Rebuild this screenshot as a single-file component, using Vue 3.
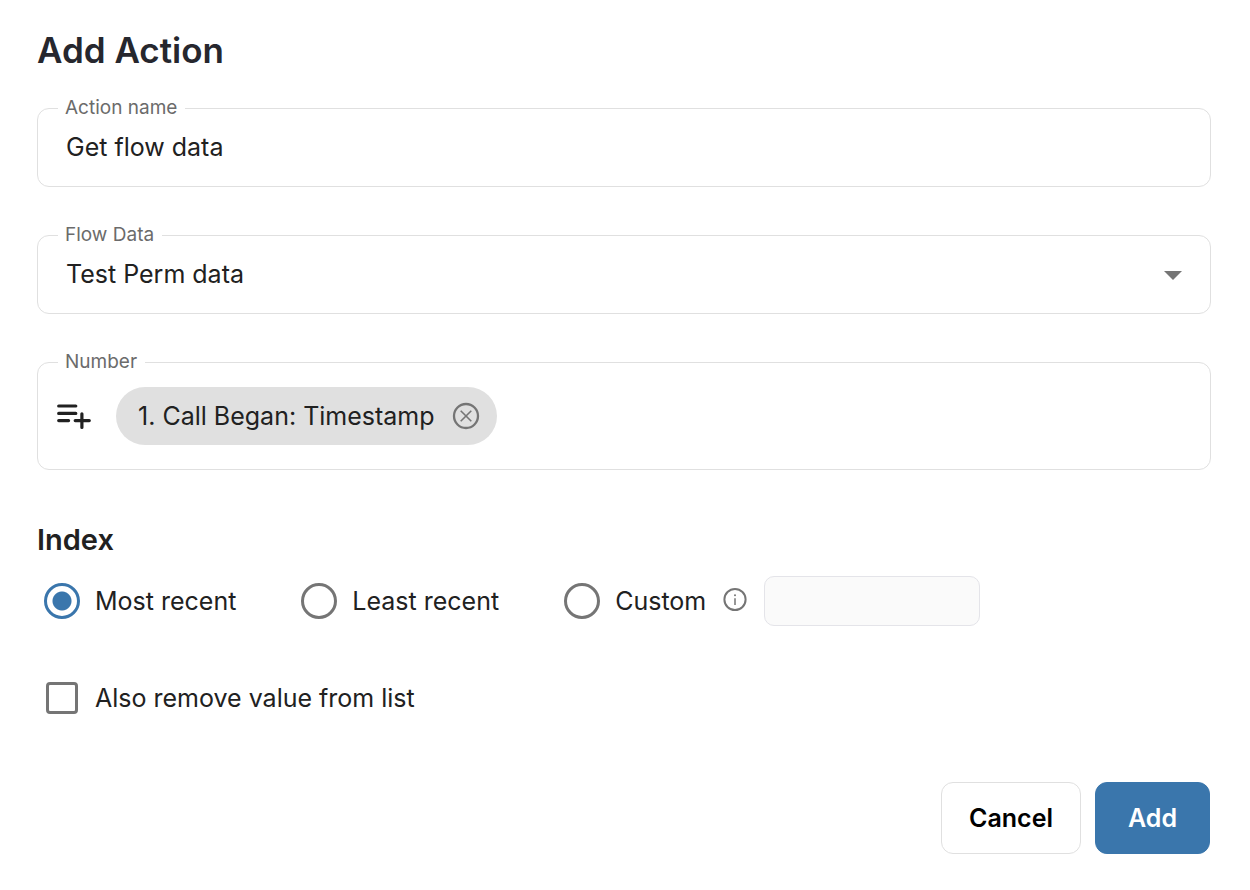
<script setup>
import { ref } from 'vue'

const actionName = ref('Get flow data')
const flowData = ref('Test Perm data')
const chips = ref(['1. Call Began: Timestamp'])
const index = ref('most')
const customIndex = ref('')
const removeValue = ref(false)
</script>

<template>
  <form class="dialog" @submit.prevent>
    <h1 class="title">Add Action</h1>

    <div class="field">
      <label class="field-label" for="action-name">Action name</label>
      <input id="action-name" v-model="actionName" class="control" type="text" />
    </div>

    <div class="field">
      <label class="field-label" for="flow-data">Flow Data</label>
      <select id="flow-data" v-model="flowData" class="control">
        <option>Test Perm data</option>
      </select>
      <svg class="arrow" width="18" height="9" viewBox="0 0 18 9" aria-hidden="true">
        <path d="M0 0h18L9 9z" fill="#757575" />
      </svg>
    </div>

    <div class="field chip-field" role="group" aria-labelledby="number-label">
      <span id="number-label" class="field-label">Number</span>
      <button class="icon-button" type="button" aria-label="Insert value">
        <svg width="36" height="28" viewBox="0 0 36 28" fill="none" stroke="#212121" stroke-width="3.2" stroke-linecap="round">
          <path d="M2.7 4H19.8M2.7 11.4H19.8M2.7 18.6H12.6M19.2 18.6H33.3M25.9 11.8V25.4" />
        </svg>
      </button>
      <span v-for="(chip, i) in chips" :key="chip" class="chip">
        {{ chip }}
        <button class="icon-button" type="button" aria-label="Remove value" @click="chips.splice(i, 1)">
          <svg width="28" height="28" viewBox="0 0 28 28" fill="none" stroke="#757575">
            <circle cx="14" cy="14" r="12" stroke-width="2.3" />
            <path d="M8.7 8.7l10.6 10.6M19.3 8.7L8.7 19.3" stroke-width="1.6" />
          </svg>
        </button>
      </span>
    </div>

    <h2 id="index-title" class="subtitle">Index</h2>
    <div class="options" role="radiogroup" aria-labelledby="index-title">
      <label class="option"><input v-model="index" class="radio" type="radio" name="index" value="most" />Most recent</label>
      <label class="option"><input v-model="index" class="radio" type="radio" name="index" value="least" />Least recent</label>
      <div class="custom">
        <label class="option"><input v-model="index" class="radio" type="radio" name="index" value="custom" />Custom</label>
        <svg class="info" width="24" height="24" viewBox="0 0 24 24" fill="none" stroke="#757575" aria-hidden="true">
          <circle cx="12" cy="10.5" r="10.6" stroke-width="2" />
          <path d="M12 9.3V15.9" stroke-width="1.5" />
          <circle cx="12" cy="6.3" r="1" fill="#757575" stroke="none" />
        </svg>
        <input v-model="customIndex" class="custom-input" type="text" aria-label="Custom index" :disabled="index !== 'custom'" />
      </div>
    </div>

    <label class="option remove"><input v-model="removeValue" class="checkbox" type="checkbox" />Also remove value from list</label>

    <div class="actions">
      <button class="button" type="button">Cancel</button>
      <button class="button primary" type="submit">Add</button>
    </div>
  </form>
</template>

<style>
body {
  background: #fff;
}
</style>

<style scoped>
.dialog,
.dialog * {
  box-sizing: border-box;
}
.dialog {
  display: flex;
  flex-direction: column;
  padding: 28px 39px 36px 37px;
  font-family: Inter, "Liberation Sans", sans-serif;
  font-size: 25px;
  line-height: 32px;
  color: #212121;
}
.title {
  margin: 0 0 36px;
  font-size: 35px;
  line-height: 44px;
  font-weight: 600;
  color: #26272e;
}
.field {
  position: relative;
  display: flex;
  margin-bottom: 48px;
  border: 1px solid #e0e0e0;
  border-radius: 12px;
}
.field-label {
  position: absolute;
  top: -13px;
  left: 20px;
  padding: 0 8px 0 7px;
  background: #fff;
  font-size: 19px;
  line-height: 24px;
  color: #6b6b6b;
}
.control {
  flex: 1;
  min-width: 0;
  height: 77px;
  margin: 0;
  padding: 0 28px 2px;
  border: 0;
  border-radius: 12px;
  background: transparent;
  appearance: none;
  font: inherit;
  color: inherit;
  outline: none;
}
.arrow {
  position: absolute;
  top: 35px;
  right: 28px;
  pointer-events: none;
}
.chip-field {
  align-items: center;
  gap: 24px;
  padding: 24px 18px;
}
.icon-button {
  display: flex;
  margin: 0;
  padding: 0;
  border: 0;
  background: none;
  cursor: pointer;
}
.chip {
  display: flex;
  align-items: center;
  gap: 17px;
  height: 58px;
  padding: 0 17px 0 22px;
  border-radius: 29px;
  background: #e0e0e0;
}
.subtitle {
  margin: 4px 0 18px;
  font-size: 29px;
  line-height: 36px;
  font-weight: 600;
}
.options {
  display: flex;
  flex-wrap: wrap;
  align-items: center;
  gap: 65px;
  padding-left: 7px;
}
.option {
  display: flex;
  align-items: center;
  gap: 15px;
}
.custom {
  display: flex;
  align-items: center;
  gap: 17px;
}
.info {
  overflow: visible;
}
.radio,
.checkbox {
  flex: none;
  appearance: none;
  margin: 0;
  border: 3px solid #757575;
  background: #fff;
}
.radio {
  width: 36px;
  height: 36px;
  border-radius: 50%;
}
.radio:checked {
  border-color: #3a76ac;
  background: radial-gradient(circle, #3a76ac 9px, #fff 10px);
}
.checkbox {
  width: 32px;
  height: 32px;
  border-radius: 4px;
}
.checkbox:checked {
  border-color: #3a76ac;
  background: #3a76ac;
}
.custom-input {
  width: 216px;
  height: 50px;
  padding: 0 16px;
  border: 1px solid #e4e4e9;
  border-radius: 10px;
  background: #fafafa;
  font: inherit;
}
.remove {
  align-self: flex-start;
  gap: 17px;
  margin-top: 56px;
  padding-left: 9px;
}
.actions {
  display: flex;
  justify-content: flex-end;
  gap: 14px;
  margin-top: 68px;
  padding-right: 1px;
}
.button {
  height: 72px;
  padding: 0 27px;
  border: 1px solid #e0e0e0;
  border-radius: 12px;
  background: #fff;
  font: inherit;
  font-weight: 600;
  color: #000;
  cursor: pointer;
}
.primary {
  padding: 0 32px;
  border-color: #3a76ac;
  background: #3a76ac;
  color: #fff;
}
</style>
